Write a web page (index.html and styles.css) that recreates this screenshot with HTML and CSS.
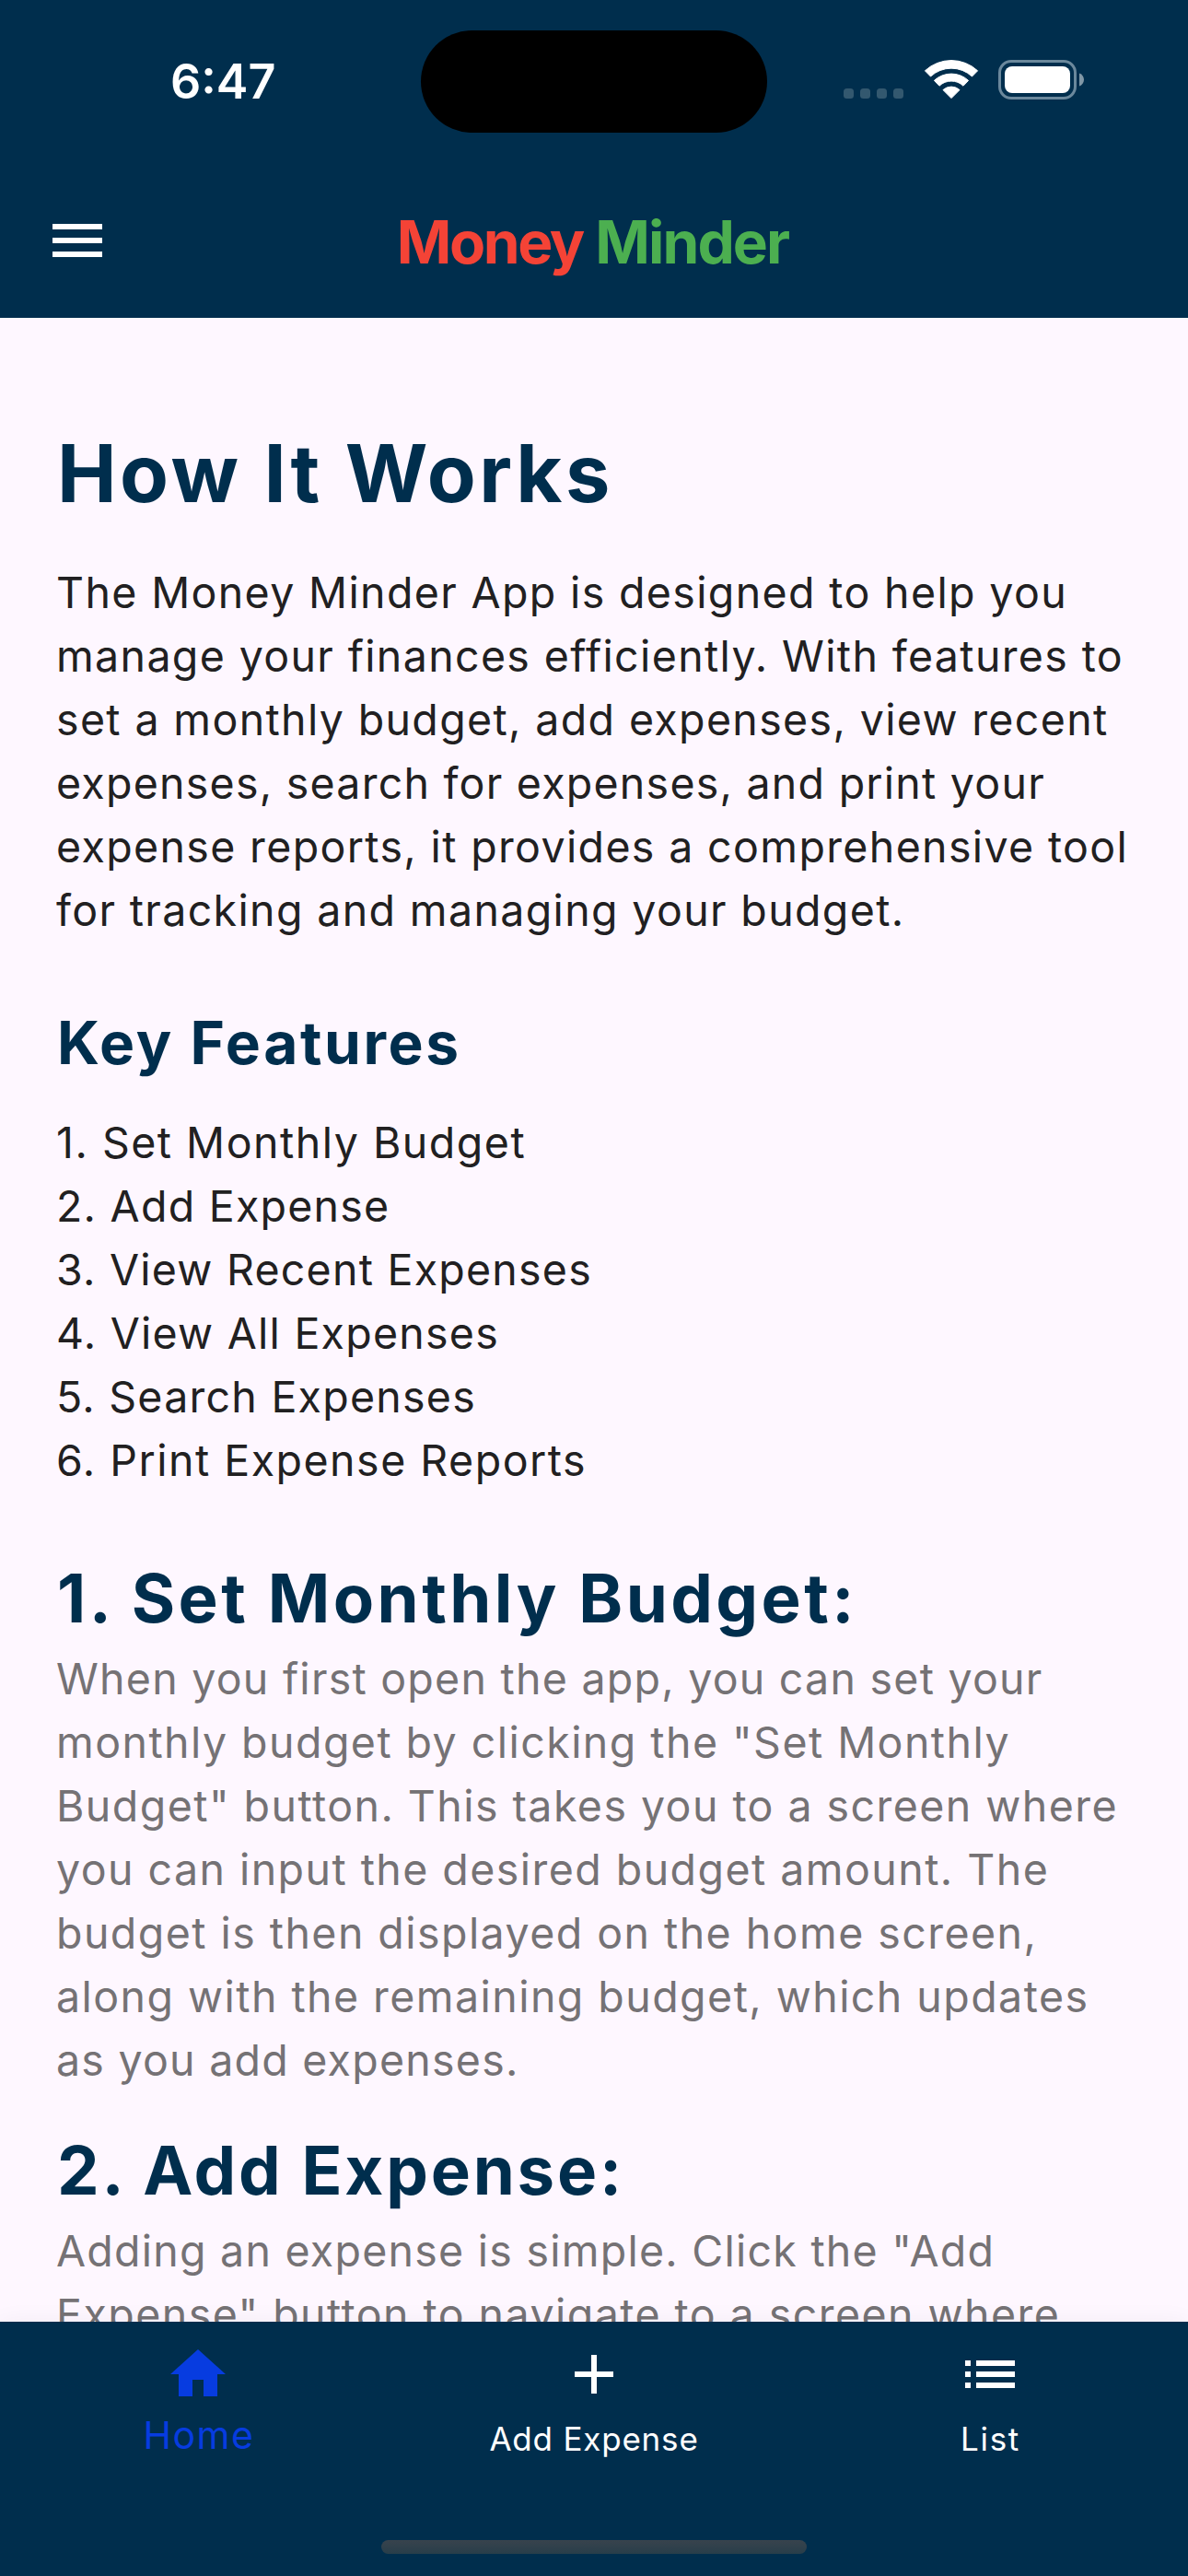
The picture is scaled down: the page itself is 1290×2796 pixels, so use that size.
FILE: index.html
```
<!DOCTYPE html>
<html lang="en">
<head>
<meta charset="utf-8">
<title>Money Minder</title>
<link rel="stylesheet" href="styles.css">
</head>
<body>
<div class="screen">
  <header class="top">
    <div class="status">
      <div class="time">6:47</div>
      <div class="island"></div>
      <div class="indicators">
        <svg class="cell" width="66" height="11" viewBox="0 0 66 11"><rect width="11" height="11" rx="3.5"/><rect x="18" width="11" height="11" rx="3.5"/><rect x="36" width="11" height="11" rx="3.5"/><rect x="54" width="11" height="11" rx="3.5"/></svg>
        <svg class="wifi" width="60" height="44" viewBox="0 0 60 44"><path d="M1.4 11.8A42 42 0 0 1 58.6 11.8L52.5 18A33 33 0 0 0 7.5 18Z"/><path d="M11.4 22.4A27.3 27.3 0 0 1 48.6 22.4L43 28.2A19 19 0 0 0 17 28.2Z"/><path d="M21 32.6A13.3 13.3 0 0 1 39 32.6L30 41.6Z"/></svg>
        <svg class="battery" width="94" height="43" viewBox="0 0 94 43"><rect class="case" x="1.5" y="1.5" width="82" height="40" rx="12.5"/><rect class="charge" x="7" y="7" width="71" height="29" rx="8"/><path class="nub" d="M88 14.5c3 1 5 3.800 5 7s-2 6-5 7z"/></svg>
      </div>
    </div>
    <div class="appbar">
      <svg class="icon menu" viewBox="0 0 24 24"><path d="M3 18h18v-2H3v2zm0-5h18v-2H3v2zm0-7v2h18V6H3z"/></svg>
      <div class="brand"><span class="money">Money</span> <span class="minder">Minder</span></div>
    </div>
  </header>

  <main class="content">
    <h1>How It Works</h1>
    <p class="intro">The Money Minder App is designed to help you<br>manage your finances efficiently. With features to<br>set a monthly budget, add expenses, view recent<br><span class="snug">expenses, search for expenses, and print your</span><br>expense reports, it provides a comprehensive tool<br>for tracking and managing your budget.</p>
    <h2>Key Features</h2>
    <ul class="features">
      <li class="loose">1. Set Monthly Budget</li>
      <li>2. Add Expense</li>
      <li>3. View Recent Expenses</li>
      <li>4. View All Expenses</li>
      <li>5. Search Expenses</li>
      <li class="loose">6. Print Expense Reports</li>
    </ul>
    <section>
      <h3>1. Set Monthly Budget:</h3>
      <p><span class="snug">When you first open the app, you can set your</span><br>monthly budget by clicking the "Set Monthly<br>Budget" button. This takes you to a screen where<br>you can input the desired budget amount. The<br>budget is then displayed on the home screen,<br>along with the remaining budget, which updates<br><span class="snug">as you add expenses.</span></p>
    </section>
    <section>
      <h3 class="tight">2. Add Expense:</h3>
      <p><span class="snug">Adding an expense is simple. Click the "Add</span><br>Expense" button to navigate to a screen where</p>
    </section>
  </main>

  <nav class="tabs">
    <div class="tab active">
      <svg class="icon" viewBox="0 0 24 24"><path d="M10 20v-6h4v6h5v-8h3L12 3 2 12h3v8z"/></svg>
      <span>Home</span>
    </div>
    <div class="tab">
      <svg class="icon" viewBox="0 0 24 24"><path d="M19 13h-6v6h-2v-6H5v-2h6V5h2v6h6v2z"/></svg>
      <span>Add Expense</span>
    </div>
    <div class="tab list">
      <svg class="icon" viewBox="0 0 24 24"><path d="M3 13h2v-2H3v2zm0 4h2v-2H3v2zm0-8h2V7H3v2zm4 4h14v-2H7v2zm0 4h14v-2H7v2zM7 7v2h14V7H7z"/></svg>
      <span>List</span>
    </div>
    <div class="home-indicator"></div>
  </nav>
</div>
</body>
</html>
```
FILE: styles.css
```
* { box-sizing: border-box; margin: 0; padding: 0; }
body { font-family: Inter, "Liberation Sans", sans-serif; background: #fef7ff; font-kerning: normal; }
.screen { width: 1290px; height: 2796px; display: flex; flex-direction: column; overflow: hidden; }

.top { flex: none; height: 345px; background: #002e4d; color: #fff; }
.status { height: 177px; display: grid; grid-template-columns: 457px 376px 457px; }
.time { padding: 57px 0 0 185px; font-size: 52px; font-weight: 600; line-height: 64px; }
.island { height: 111px; margin-top: 33px; border-radius: 56px; background: #000; }
.indicators { display: flex; align-items: flex-start; padding: 65px 0 0 83px; }
.cell { margin: 31px 20.5px 0 0; fill: #33586f; }
.wifi { margin-right: 21.5px; fill: #fff; stroke: #fff; stroke-width: 1; stroke-linejoin: round; }
.battery { margin-top: 0; }
.case { fill: none; stroke: #6b889c; stroke-width: 3; }
.charge { fill: #fff; }
.nub { fill: #8097a6; }

.appbar { height: 168px; display: grid; grid-template-columns: 168px 1fr 168px; align-items: center; }
.icon { width: 72px; height: 72px; fill: currentColor; display: block; }
.menu { margin-left: 48px; }
.brand { padding: 3px 3px 0 0; text-align: center; font-size: 64px; font-weight: 700; line-height: 80px; letter-spacing: -1.9px; white-space: nowrap; }
.money { color: #f44336; letter-spacing: -2.4px; }
.minder { color: #4caf50; }

.content { flex: 1; min-height: 0; overflow: hidden; padding: 115px 40px 0 61px; color: #212021; font-size: 46.5px; font-weight: 380; line-height: 69px; letter-spacing: 1.36px; white-space: nowrap; }
h1, h2, h3 { color: #002e4d; font-weight: 700; padding-left: 1px; }
h1 { font-size: 86.5px; line-height: 108px; letter-spacing: 3.5px; margin-bottom: 40.6px; }
h2 { font-size: 64px; line-height: 90px; letter-spacing: 2.6px; margin: 64px 0 29px; }
h3 { font-size: 72.5px; line-height: 106px; letter-spacing: 3.42px; }
h3.tight { letter-spacing: 2.8px; }
.snug { letter-spacing: 1.25px; }
.features { list-style: none; letter-spacing: 1.25px; margin-bottom: 62px; }
.features .loose { letter-spacing: 1.5px; }
section { margin-bottom: 32px; }
section p { color: #757275; letter-spacing: 1.45px; }

.tabs { flex: none; position: relative; height: 276px; display: grid; grid-template-columns: repeat(3, 430px); background: #002e4d; color: #fff; box-shadow: 0 0 24px rgba(0, 0, 0, .05); }
.tab { display: flex; flex-direction: column; align-items: center; padding-top: 21px; }
.tab span { margin-top: 13px; font-size: 35px; line-height: 42px; letter-spacing: .8px; }
.tab.list span { letter-spacing: 1.7px; padding-left: 1px; }
.tab.active { color: #073ce0; }
.tab.active span { margin-top: 5px; padding-left: 2px; font-size: 41px; line-height: 50px; letter-spacing: 1.5px; }
.home-indicator { position: absolute; left: 414px; top: 237px; width: 462px; height: 15px; border-radius: 8px; background: linear-gradient(#38434d, #283e4a); }
```
